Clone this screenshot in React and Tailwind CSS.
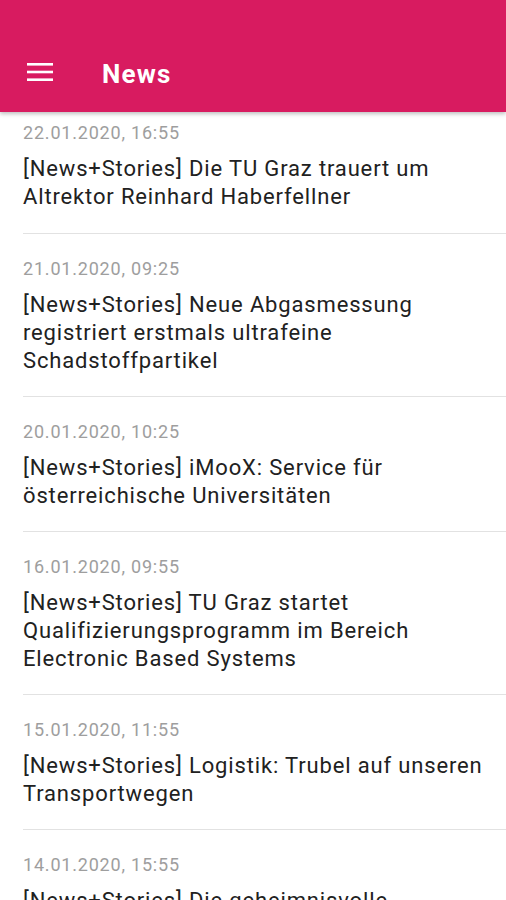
import React from "react";

const items = [
  { date: "22.01.2020, 16:55", title: "[News+Stories] Die TU Graz trauert um Altrektor Reinhard Haberfellner" },
  { date: "21.01.2020, 09:25", title: "[News+Stories] Neue Abgasmessung registriert erstmals ultrafeine Schadstoffpartikel" },
  { date: "20.01.2020, 10:25", title: "[News+Stories] iMooX: Service für österreichische Universitäten" },
  { date: "16.01.2020, 09:55", title: "[News+Stories] TU Graz startet Qualifizierungsprogramm im Bereich Electronic Based Systems" },
  { date: "15.01.2020, 11:55", title: "[News+Stories] Logistik: Trubel auf unseren Transportwegen" },
  { date: "14.01.2020, 15:55", title: "[News+Stories] Die geheimnisvolle" },
];

export default function App() {
  return (
    <div className="w-[506px] h-[900px] overflow-hidden bg-white relative" style={{ fontFamily: "Roboto, 'Noto Sans', sans-serif" }}>
      <div className="relative z-10 h-[112px] bg-[#d81b60] flex items-end pb-[20px] shadow-[0_2px_4px_rgba(0,0,0,0.25)]">
        <div className="flex items-center h-[36px]">
          <svg width="26" height="20" viewBox="0 0 26 20" className="ml-[27px] -mt-[5px]">
            <rect x="0" y="1" width="26" height="2.6" fill="#fff" />
            <rect x="0" y="8.7" width="26" height="2.6" fill="#fff" />
            <rect x="0" y="16.4" width="26" height="2.6" fill="#fff" />
          </svg>
          <span className="ml-[49px] text-white font-bold text-[26px] tracking-[1.2px] leading-[36px]">News</span>
        </div>
      </div>
      <div className="pl-[23px]">
        {items.map((it, i) => (
          <div key={i} className={i === 0 ? "" : "border-t border-[#e2e2e2]"}>
            <div className={`${i === 0 ? "pt-[9px] pb-[22px]" : "pt-[23px] pb-[21px]"} pr-[23px]`}>
              <div className="text-[18px] leading-[24px] tracking-[0.8px] text-[#9e9e9e]">{it.date}</div>
              <div className="mt-[10px] text-[22px] leading-[28px] tracking-[0.85px] text-[#212121]">{it.title}</div>
            </div>
          </div>
        ))}
      </div>
    </div>
  );
}
